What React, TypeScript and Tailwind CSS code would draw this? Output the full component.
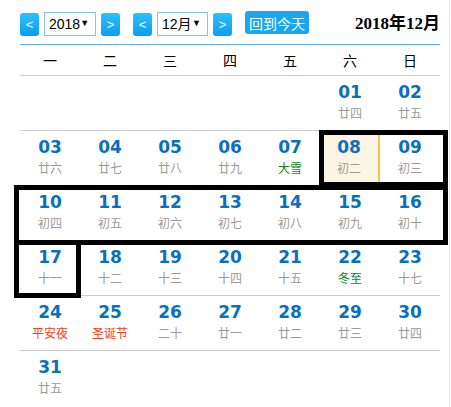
import React from "react";

type Day = { d: string; lunar: string; tone?: "green" | "red"; today?: boolean };

const weeks: (Day | null)[][] = [
  [null, null, null, null, null, { d: "01", lunar: "廿四" }, { d: "02", lunar: "廿五" }],
  [
    { d: "03", lunar: "廿六" },
    { d: "04", lunar: "廿七" },
    { d: "05", lunar: "廿八" },
    { d: "06", lunar: "廿九" },
    { d: "07", lunar: "大雪", tone: "green" },
    { d: "08", lunar: "初二", today: true },
    { d: "09", lunar: "初三" },
  ],
  [
    { d: "10", lunar: "初四" },
    { d: "11", lunar: "初五" },
    { d: "12", lunar: "初六" },
    { d: "13", lunar: "初七" },
    { d: "14", lunar: "初八" },
    { d: "15", lunar: "初九" },
    { d: "16", lunar: "初十" },
  ],
  [
    { d: "17", lunar: "十一" },
    { d: "18", lunar: "十二" },
    { d: "19", lunar: "十三" },
    { d: "20", lunar: "十四" },
    { d: "21", lunar: "十五" },
    { d: "22", lunar: "冬至", tone: "green" },
    { d: "23", lunar: "十七" },
  ],
  [
    { d: "24", lunar: "平安夜", tone: "red" },
    { d: "25", lunar: "圣诞节", tone: "red" },
    { d: "26", lunar: "二十" },
    { d: "27", lunar: "廿一" },
    { d: "28", lunar: "廿二" },
    { d: "29", lunar: "廿三" },
    { d: "30", lunar: "廿四" },
  ],
  [{ d: "31", lunar: "廿五" }, null, null, null, null, null, null],
];

const heads = ["一", "二", "三", "四", "五", "六", "日"];

const cjk = { fontFamily: '"Noto Sans CJK SC", sans-serif' };

const NavBtn = ({ label }: { label: string }) => (
  <button className="shrink-0 w-[19px] h-[23px] rounded-[3px] bg-gradient-to-b from-[#2cc0ff] to-[#0a9df0] text-white text-[13px] leading-none flex items-center justify-center" style={{ fontFamily: '"Liberation Sans", sans-serif' }}>
    {label}
  </button>
);

const Select = ({ value, w }: { value: string; w: string }) => (
  <div className={`${w} shrink-0 whitespace-nowrap h-[24px] border border-[#90bfe6] bg-white flex items-center justify-between pl-[4px] pr-[6px] text-[14px] text-black`} style={{ fontFamily: '"Liberation Sans", "Noto Sans CJK SC", sans-serif' }}>
    <span>{value}</span>
    <span className="text-[9px]">▼</span>
  </div>
);

export default function App() {
  return (
    <div className="relative w-[451px] h-[407px] bg-white overflow-hidden">
      <div className="absolute right-[1px] top-0 bottom-0 w-px bg-[#dcefe6]" />
      <div className="pl-[20px] w-[440px]">
        <div className="h-[44px] flex items-start pt-[11px]">
          <div className="flex items-center gap-[5px] mt-[1px]">
            <NavBtn label="<" />
            <Select value="2018" w="w-[52px]" />
            <NavBtn label=">" />
          </div>
          <div className="flex items-center gap-[5px] ml-[13px] mt-[1px]">
            <NavBtn label="<" />
            <Select value="12月" w="w-[51px]" />
            <NavBtn label=">" />
          </div>
          <button className="shrink-0 whitespace-nowrap ml-[13px] h-[23px] w-[64px] rounded-[3px] bg-[#1aa7f0] text-white text-[14px] leading-none flex items-center justify-center" style={cjk}>
            回到今天
          </button>
          <div className="ml-auto whitespace-nowrap text-[17px] font-bold text-black leading-[26px]" style={{ fontFamily: '"Liberation Serif", "Noto Sans CJK SC", serif' }}>
            2018年12月
          </div>
        </div>
        <div className="h-px bg-[#5eaef0]" />
        <div className="grid grid-cols-7 h-[30px] items-center text-[14px] text-black text-center" style={cjk}>
          {heads.map((h) => (
            <div key={h}>{h}</div>
          ))}
        </div>
        {weeks.map((w, i) => (
          <div key={i} className="grid grid-cols-7 h-[55px] border-t border-[#cccccc]">
            {w.map((c, j) => (
              <div key={j} className={`flex flex-col items-center pt-[6px] ${c?.today ? "bg-[#fdf5e3] border-r-2 border-[#f6c542]" : ""}`}>
                {c && (
                  <>
                    <div className="text-[17px] font-bold text-[#0b6fc0] leading-[20px]" style={{ fontFamily: '"DejaVu Sans", sans-serif' }}>
                      {c.d}
                    </div>
                    <div className={`text-[12px] leading-[22px] ${c.tone === "green" ? "text-[#0a8a1e]" : c.tone === "red" ? "text-[#ff3a12]" : "text-[#9a9a9a]"}`} style={cjk}>
                      {c.lunar}
                    </div>
                  </>
                )}
              </div>
            ))}
          </div>
        ))}
      </div>
      <div className="absolute left-[319px] top-[130px] w-[129px] h-[57px] border-[5px] border-black" />
      <div className="absolute left-[14px] top-[185px] w-[434px] h-[60px] border-[5px] border-black" />
      <div className="absolute left-[14px] top-[240px] w-[67px] h-[58px] border-[5px] border-black" />
    </div>
  );
}
